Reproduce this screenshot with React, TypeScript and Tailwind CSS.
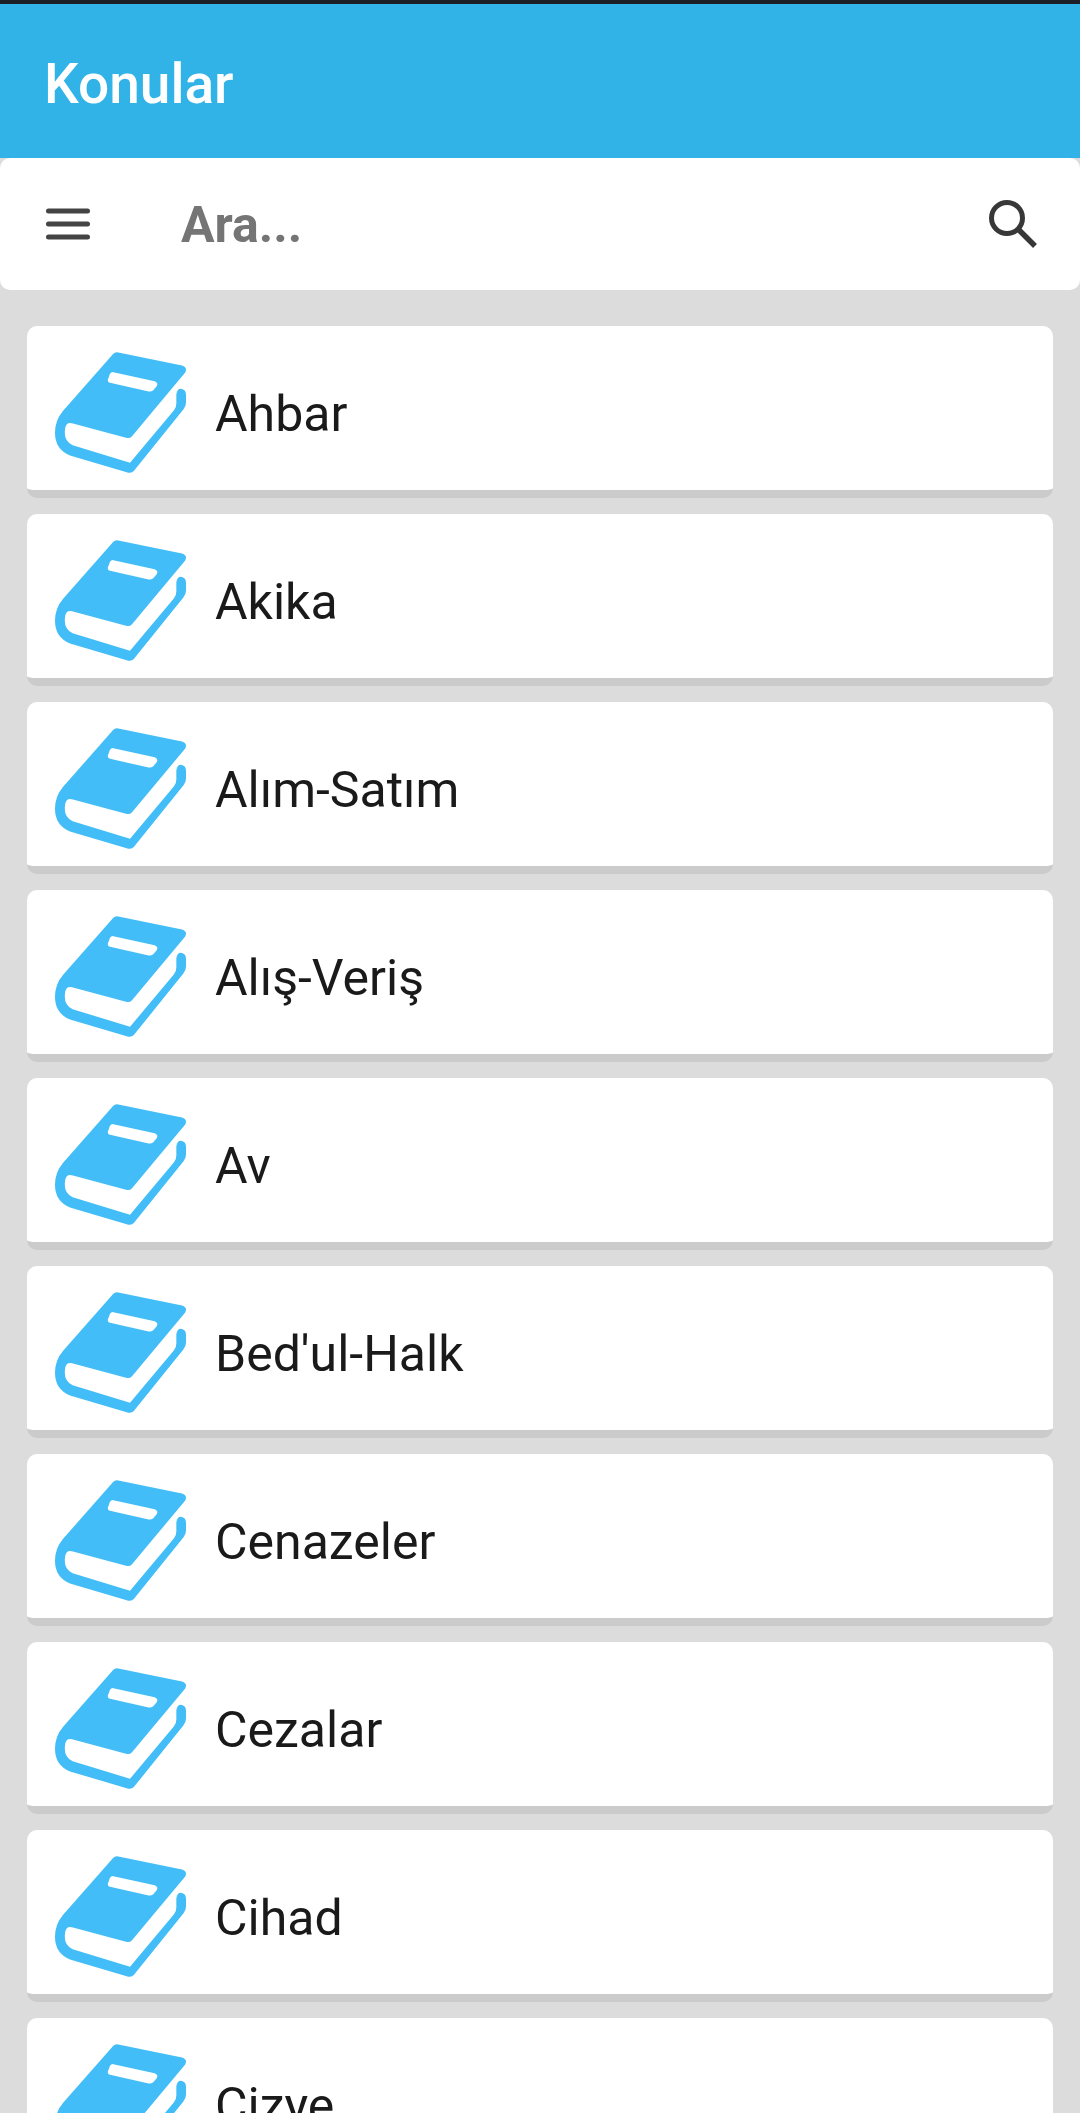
const topics = [
  "Ahbar",
  "Akika",
  "Alım-Satım",
  "Alış-Veriş",
  "Av",
  "Bed'ul-Halk",
  "Cenazeler",
  "Cezalar",
  "Cihad",
  "Cizye",
];

const BookIcon = () => (
  <svg viewBox="15 20 393 362" className="w-[131px] h-[121px] shrink-0">
    <path
      fill="#42bdf8"
      d="M190 25 Q195 19 205 21 L396 60 Q414 66 405 82 L246 272 Q240 280 228 277 L66 233 Q50 229 46 245 Q38 285 68 299 L240 352 L372 194 Q380 184 379 170 L379 146 Q382 130 393 130 Q408 132 408 148 L408 172 Q408 182 400 192 L252 376 Q244 385 230 380 L60 330 Q15 312 15 262 Q15 224 40 195 Z"
    />
    <path
      fill="#ffffff"
      d="M190 80 L314 107 Q326 112 320 122 L310 134 Q304 139 296 138 L180 112 Q170 108 175 98 L180 85 Q184 79 190 80 Z"
    />
  </svg>
);

const MenuIcon = () => (
  <svg viewBox="0 0 44 32" className="w-[44px] h-[32px]">
    <path d="M2.5 3 H41.5 M2.5 16 H41.5 M2.5 29 H41.5" stroke="#444444" strokeWidth="5" strokeLinecap="round" fill="none" />
  </svg>
);

const SearchIcon = () => (
  <svg viewBox="0 0 48 48" className="w-[48px] h-[48px]">
    <circle cx="18" cy="18" r="15.5" fill="none" stroke="#383838" strokeWidth="5" />
    <path d="M29 29 L46 46" stroke="#383838" strokeWidth="5.5" fill="none" />
  </svg>
);

export default function App() {
  return (
    <div className="h-[2113px] overflow-hidden bg-[#dcdcdc] font-['Roboto',sans-serif]">
      <div className="h-1 bg-[#1c2026]" />
      <div className="h-[154px] bg-[#31b3e7] flex items-center pl-[44px]">
        <h1 className="text-[55px] font-medium text-white leading-none pt-[6px]">Konular</h1>
      </div>

      {/* SEARCH */}
      <div className="h-[132px] bg-white rounded-[10px] flex items-center pl-[46px] pr-[43px]">
        <MenuIcon />
        <span className="ml-[91px] flex-1 text-[50px] font-bold text-[#757575] leading-none pt-[2px]">
          Ara...
        </span>
        <SearchIcon />
      </div>

      {/* LIST */}
      <div className="flex flex-col gap-4 px-[27px] pt-[36px]">
        {topics.map((topic) => (
          <div
            key={topic}
            className="h-[172px] shrink-0 bg-white rounded-[10px] border-b-[8px] border-[#cbcbcb] flex items-center pl-[28px] pt-[8px] gap-[29px]"
          >
            <BookIcon />
            <span className="text-[50px] text-[#1a1a1a] leading-none pt-[4px]">{topic}</span>
          </div>
        ))}
      </div>
    </div>
  );
}
